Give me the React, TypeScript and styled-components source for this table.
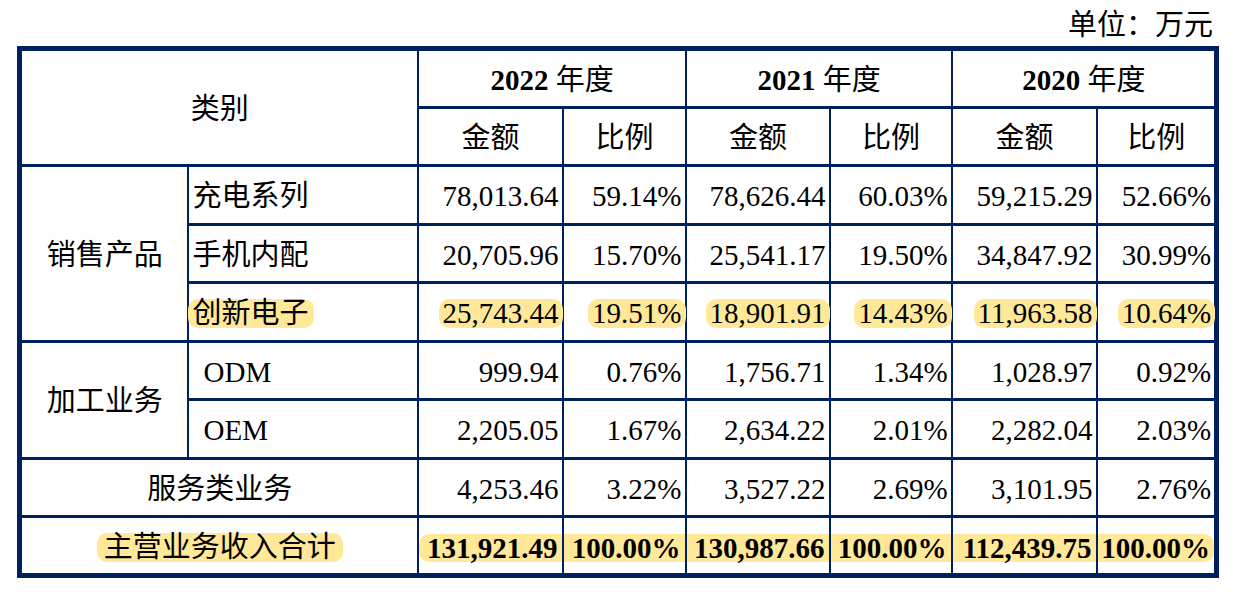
import styled, { createGlobalStyle } from "styled-components";

const GlobalStyle = createGlobalStyle`
  html, body {
    margin: 0;
    padding: 0;
    background: #ffffff;
  }
`;

const LINE = "#002060";
const MARK = "#ffe999";

type Align = "left" | "right" | "center";
type Round = "both" | "left" | "right" | "none";

const incomeRows = [
  { group: "销售产品", span: 3, name: "充电系列", values: ["78,013.64", "59.14%", "78,626.44", "60.03%", "59,215.29", "52.66%"] },
  { name: "手机内配", values: ["20,705.96", "15.70%", "25,541.17", "19.50%", "34,847.92", "30.99%"] },
  { name: "创新电子", marked: true, values: ["25,743.44", "19.51%", "18,901.91", "14.43%", "11,963.58", "10.64%"] },
  { group: "加工业务", span: 2, name: "ODM", latin: true, values: ["999.94", "0.76%", "1,756.71", "1.34%", "1,028.97", "0.92%"] },
  { name: "OEM", latin: true, values: ["2,205.05", "1.67%", "2,634.22", "2.01%", "2,282.04", "2.03%"] },
];

const serviceRow = ["4,253.46", "3.22%", "3,527.22", "2.69%", "3,101.95", "2.76%"];
const totalRow = ["131,921.49", "100.00%", "130,987.66", "100.00%", "112,439.75", "100.00%"];
const years = ["2022", "2021", "2020"];
const colWidths = [168, 230, 145, 123, 144, 122, 145, 120];

const Page = styled.div`
  padding-left: 17px;
  width: 1202px;
  font-family: "Liberation Serif", "Noto Sans CJK SC", serif;
  color: #000;
`;

const Unit = styled.div`
  height: 46px;
  box-sizing: border-box;
  padding: 2px 6px 0 0;
  line-height: 46px;
  font-size: 29px;
  text-align: right;
`;

const Table = styled.table`
  border-collapse: collapse;
  table-layout: fixed;
  width: 1202px;
  border: 5px solid ${LINE};
  font-size: 29px;
`;

const Row = styled.tr`
  height: 58.5px;
`;

const Cell = styled.td<{ $align?: Align; $indent?: number; $flush?: boolean }>`
  border-left: 2px solid ${LINE};
  border-right: 2px solid ${LINE};
  border-top: 3px solid ${LINE};
  border-bottom: 3px solid ${LINE};
  padding: ${(p) => (p.$flush ? "3px 0 0 0" : `3px 3px 0 ${p.$indent ?? 4}px`)};
  text-align: ${(p) => p.$align ?? "right"};
  vertical-align: middle;
  white-space: nowrap;
  font-weight: normal;
  line-height: 32px;
`;

const Bold = styled.span`
  font-weight: bold;
`;

const Mark = styled.span<{ $pad?: number }>`
  display: inline-block;
  background: ${MARK};
  border-radius: 10px;
  line-height: 29px;
  padding: 0 ${(p) => p.$pad ?? 4}px;
  margin: 0 -${(p) => p.$pad ?? 4}px;
`;

const Band = styled.span<{ $round: Round }>`
  display: block;
  background: ${MARK};
  line-height: 28px;
  margin-top: 2px;
  padding-right: 4px;
  font-weight: bold;
  border-radius: ${(p) =>
    p.$round === "left" ? "10px 0 0 10px" : p.$round === "right" ? "0 10px 10px 0" : "0"};
`;

export default function App() {
  return (
    <>
      <GlobalStyle />
      <Page>
        <Unit>单位：万元</Unit>
        <Table>
          <colgroup>
            {colWidths.map((w, i) => (
              <col key={i} style={{ width: w }} />
            ))}
          </colgroup>
          <tbody>
            <Row>
              <Cell as="th" rowSpan={2} colSpan={2} $align="center">
                类别
              </Cell>
              {years.map((y) => (
                <Cell as="th" key={y} colSpan={2} $align="center">
                  <Bold>{y}</Bold> 年度
                </Cell>
              ))}
            </Row>
            <Row>
              {years.map((y) => [
                <Cell as="th" key={y + "a"} $align="center">
                  金额
                </Cell>,
                <Cell as="th" key={y + "b"} $align="center">
                  比例
                </Cell>,
              ])}
            </Row>
            {incomeRows.map((r) => (
              <Row key={r.name}>
                {r.group && (
                  <Cell rowSpan={r.span} $align="center">
                    {r.group}
                  </Cell>
                )}
                <Cell $align="left" $indent={r.latin ? 15 : 4}>
                  {r.marked ? <Mark $pad={5}>{r.name}</Mark> : r.name}
                </Cell>
                {r.values.map((v, i) => (
                  <Cell key={i}>{r.marked ? <Mark>{v}</Mark> : v}</Cell>
                ))}
              </Row>
            ))}
            <Row>
              <Cell colSpan={2} $align="center">
                服务类业务
              </Cell>
              {serviceRow.map((v, i) => (
                <Cell key={i}>{v}</Cell>
              ))}
            </Row>
            <Row>
              <Cell colSpan={2} $align="center">
                <Mark $pad={7}>主营业务收入合计</Mark>
              </Cell>
              {totalRow.map((v, i) => (
                <Cell key={i} $flush>
                  <Band $round={i === 0 ? "left" : i === totalRow.length - 1 ? "right" : "none"}>
                    {v}
                  </Band>
                </Cell>
              ))}
            </Row>
          </tbody>
        </Table>
      </Page>
    </>
  );
}
